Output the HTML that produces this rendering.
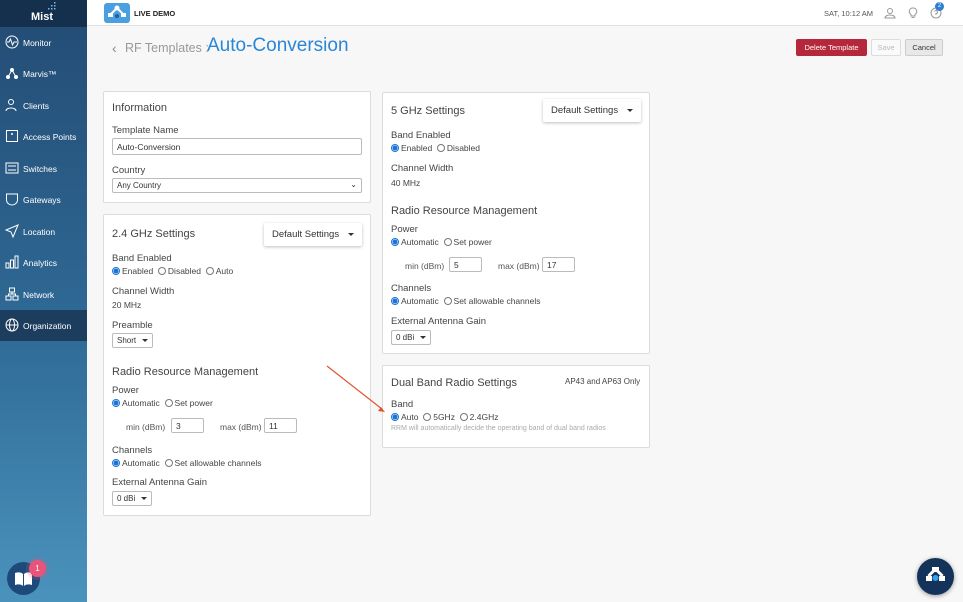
<!DOCTYPE html>
<html><head><meta charset="utf-8"><style>
*{box-sizing:border-box;margin:0;padding:0}
body{width:963px;height:602px;overflow:hidden;background:#f7f7f7;font-family:"Liberation Sans",sans-serif;color:#333;position:relative}
.a{position:absolute;white-space:nowrap}
#side{position:absolute;left:0;top:0;width:87px;height:602px;background:linear-gradient(#234b73,#2f6a96 55%,#4a93bd)}
#logo{position:absolute;left:0;top:0;width:87px;height:27px;background:#14304d}
.nav{position:absolute;left:0;width:87px;height:31px;color:#fff;font-size:8.5px;display:flex;align-items:center;padding-left:23px}
.nav svg{position:absolute;left:5px;top:8px}
#top{position:absolute;left:87px;top:0;right:0;height:26px;background:#fff;border-bottom:1px solid #e2e2e2}
.card{position:absolute;background:#fff;border:1px solid #dcdcdc;border-radius:2px}
.h{font-size:11px;color:#444}
.l{font-size:9.5px;color:#444}
.s{font-size:8.5px;color:#444}
.rb{display:inline-block;width:8px;height:8px;border:1px solid #777;border-radius:50%;vertical-align:-1px;margin-right:2px;background:#fff}
.rb.on{border-color:#1a73d9;background:radial-gradient(#1a73d9 2.2px,#fff 2.8px)}
.inp{position:absolute;border:1px solid #bbb;border-radius:2px;background:#fff;font-size:8.5px;padding:2px 4px;height:15px}
.dd{position:absolute;background:#fff;border-radius:2px;box-shadow:0 1px 3px rgba(0,0,0,.25);font-size:9.5px;color:#333;padding:6px 8px}
.sel{position:absolute;border:1px solid #bbb;border-radius:2px;font-size:8px;padding:2px 4px;height:15px;background:#fff}
.tri{display:inline-block;border-left:3px solid transparent;border-right:3px solid transparent;border-top:3.5px solid #333;vertical-align:1px;margin-left:6px}
</style></head><body>
<div id="side">
<div id="logo"><div class="a" style="left:31px;top:11px;color:#fff;font-weight:bold;font-size:11px">Mist</div>
<svg class="a" style="left:45px;top:2px" width="12" height="10"><g fill="#7fb3e0"><rect x="9" y="0" width="1.5" height="1.5"/><rect x="6" y="3" width="1.5" height="1.5"/><rect x="9" y="3" width="1.5" height="1.5"/><rect x="3" y="6" width="1.5" height="1.5"/><rect x="6" y="6" width="1.5" height="1.5"/><rect x="9" y="6" width="1.5" height="1.5"/></g></svg></div>
<div class="nav" style="top:27px"><svg width="14" height="14"><circle cx="7" cy="7" r="6" fill="none" stroke="#fff"/><path d="M2 7h2l1.5-3 2 6 1.5-3h3" fill="none" stroke="#fff"/></svg>Monitor</div>
<div class="nav" style="top:58px"><svg width="14" height="14"><path d="M3 11L7 4l4 7" stroke="#fff" fill="none"/><circle cx="7" cy="4" r="2" fill="#fff"/><circle cx="3" cy="11" r="2" fill="#fff"/><circle cx="11" cy="11" r="2" fill="#fff"/></svg>Marvis™</div>
<div class="nav" style="top:90px"><svg width="14" height="14"><circle cx="6" cy="4" r="2.5" fill="none" stroke="#fff"/><path d="M1 13c0-4 10-4 10 0" fill="none" stroke="#fff"/></svg>Clients</div>
<div class="nav" style="top:121px"><svg width="14" height="14"><rect x="1.5" y="1.5" width="11" height="11" fill="none" stroke="#fff"/><circle cx="7" cy="5" r="1" fill="#fff"/></svg>Access Points</div>
<div class="nav" style="top:153px"><svg width="14" height="14"><rect x="1" y="2" width="12" height="10" fill="none" stroke="#fff"/><path d="M3 5h8M3 9h8" stroke="#fff"/></svg>Switches</div>
<div class="nav" style="top:184px"><svg width="14" height="14"><path d="M1.5 2h11v6c0 3-3 5-5.5 5S1.5 11 1.5 8z" fill="none" stroke="#fff"/></svg>Gateways</div>
<div class="nav" style="top:216px"><svg width="14" height="14"><path d="M13 1L1 6l5 2 2 5z" fill="none" stroke="#fff"/></svg>Location</div>
<div class="nav" style="top:247px"><svg width="14" height="14"><rect x="1" y="8" width="3" height="5" fill="none" stroke="#fff"/><rect x="5.5" y="5" width="3" height="8" fill="none" stroke="#fff"/><rect x="10" y="1" width="3" height="12" fill="none" stroke="#fff"/></svg>Analytics</div>
<div class="nav" style="top:279px"><svg width="14" height="14"><rect x="4.5" y="1" width="5" height="4" fill="none" stroke="#fff"/><rect x="1" y="9" width="5" height="4" fill="none" stroke="#fff"/><rect x="8" y="9" width="5" height="4" fill="none" stroke="#fff"/><path d="M7 5v2M3.5 9V7h7v2" stroke="#fff" fill="none"/></svg>Network</div>
<div class="nav" style="top:310px;background:#1c3d5e"><svg width="14" height="14"><circle cx="7" cy="7" r="6" fill="none" stroke="#fff"/><ellipse cx="7" cy="7" rx="2.5" ry="6" fill="none" stroke="#fff"/><path d="M1 7h12" stroke="#fff"/></svg>Organization</div>
<div class="a" style="left:7px;top:562px;width:33px;height:33px;border-radius:50%;background:#1d4a7a"><svg width="33" height="33"><path d="M8 11c3-1 6-1 8 1v12c-2-2-5-2-8-1zM25 11c-3-1-6-1-8 1v12c2-2 5-2 8-1z" fill="#fff"/></svg></div>
<div class="a" style="left:29px;top:560px;width:17px;height:17px;border-radius:50%;background:#e9557a;color:#fff;font-size:8px;text-align:center;line-height:17px;box-shadow:0 0 0 3px rgba(233,85,122,.2)">1</div>
</div>
<div id="top">
<div class="a" style="left:17px;top:3px;width:26px;height:20px;background:#4a9fe0;border-radius:3px"><svg width="26" height="20"><path d="M13 5l-6 6M13 5l6 6" stroke="#fff" stroke-width="2"/><circle cx="13" cy="5" r="2.5" fill="#fff"/><rect x="4" y="10" width="5" height="4" fill="#fff"/><rect x="17" y="10" width="5" height="4" fill="#fff"/><circle cx="13" cy="13" r="2" fill="#1e5fa0"/></svg></div>
<div class="a" style="left:47px;top:9px;font-size:7.5px;font-weight:bold;color:#222">LIVE DEMO</div>
<div class="a" style="left:737px;top:9px;font-size:7.5px;color:#555">SAT, 10:12 AM</div>
<svg class="a" style="left:797px;top:7px" width="12" height="12"><circle cx="6" cy="4" r="2.5" fill="none" stroke="#999"/><path d="M1 11c0-4 10-4 10 0z" fill="none" stroke="#999"/></svg>
<svg class="a" style="left:820px;top:7px" width="12" height="12"><path d="M6 1a3.5 3.5 0 0 0-2 6.5V9h4V7.5A3.5 3.5 0 0 0 6 1zM4.5 10.5h3" fill="none" stroke="#999"/></svg>
<svg class="a" style="left:843px;top:7px" width="12" height="12"><circle cx="6" cy="6" r="5" fill="none" stroke="#999"/><path d="M4.5 4.5a1.5 1.5 0 1 1 1.5 2v1.5" fill="none" stroke="#999"/></svg>
<div class="a" style="left:848px;top:2px;width:9px;height:9px;border-radius:50%;background:#2f7fd0;color:#fff;font-size:6px;text-align:center;line-height:9px">2</div>
</div>
<div class="a" style="left:112px;top:40px;font-size:14px;color:#888">‹</div>
<div class="a" style="left:125px;top:41px;font-size:12.5px;color:#999">RF Templates :</div>
<div class="a" style="left:207px;top:35px;font-size:19px;color:#2a86d6">Auto-Conversion</div>
<div class="a" style="left:796px;top:39px;width:71px;height:17px;background:#b5273a;border-radius:2px;color:#fff;font-size:7.5px;text-align:center;line-height:17px">Delete Template</div>
<div class="a" style="left:871px;top:39px;width:30px;height:17px;border:1px solid #ddd;border-radius:2px;color:#bbb;font-size:7.5px;text-align:center;line-height:15px;background:#fafafa">Save</div>
<div class="a" style="left:905px;top:39px;width:38px;height:17px;border:1px solid #ccc;border-radius:2px;color:#333;font-size:7.5px;text-align:center;line-height:15px;background:#e8e8e8">Cancel</div>

<div class="card" style="left:103px;top:91px;width:268px;height:112px">
<div class="a h" style="left:8px;top:10px">Information</div>
<div class="a l" style="left:8px;top:33px">Template Name</div>
<div class="inp" style="left:8px;top:46px;width:250px;height:17px;padding-top:3px">Auto-Conversion</div>
<div class="a l" style="left:8px;top:73px">Country</div>
<div class="inp" style="left:8px;top:86px;width:250px;height:15px;font-size:8px">Any Country<span style="position:absolute;right:4px;top:1px;font-size:8px">⌄</span></div>
</div>

<div class="card" style="left:103px;top:214px;width:268px;height:302px">
<div class="a h" style="left:8px;top:13px">2.4 GHz Settings</div>
<div class="dd" style="left:160px;top:8px">Default Settings<span class="tri" style="margin-left:9px"></span></div>
<div class="a l" style="left:8px;top:38px">Band Enabled</div>
<div class="a s" style="left:8px;top:51px"><span class="rb on"></span>Enabled &nbsp;<span class="rb"></span>Disabled &nbsp;<span class="rb"></span>Auto</div>
<div class="a l" style="left:8px;top:71px">Channel Width</div>
<div class="a s" style="left:8px;top:85px">20 MHz</div>
<div class="a l" style="left:8px;top:105px">Preamble</div>
<div class="sel" style="left:8px;top:118px">Short<span class="tri"></span></div>
<div class="a h" style="left:8px;top:151px">Radio Resource Management</div>
<div class="a l" style="left:8px;top:170px">Power</div>
<div class="a s" style="left:8px;top:183px"><span class="rb on"></span>Automatic &nbsp;<span class="rb"></span>Set power</div>
<div class="a s" style="left:22px;top:207px;color:#555">min (dBm)</div>
<div class="inp" style="left:67px;top:203px;width:33px">3</div>
<div class="a s" style="left:116px;top:207px;color:#555">max (dBm)</div>
<div class="inp" style="left:160px;top:203px;width:33px">11</div>
<div class="a l" style="left:8px;top:230px">Channels</div>
<div class="a s" style="left:8px;top:243px"><span class="rb on"></span>Automatic &nbsp;<span class="rb"></span>Set allowable channels</div>
<div class="a l" style="left:8px;top:262px">External Antenna Gain</div>
<div class="sel" style="left:8px;top:276px">0 dBi<span class="tri"></span></div>
</div>

<div class="card" style="left:382px;top:92px;width:268px;height:262px">
<div class="a h" style="left:8px;top:12px">5 GHz Settings</div>
<div class="dd" style="left:160px;top:6px">Default Settings<span class="tri" style="margin-left:9px"></span></div>
<div class="a l" style="left:8px;top:37px">Band Enabled</div>
<div class="a s" style="left:8px;top:50px"><span class="rb on"></span>Enabled &nbsp;<span class="rb"></span>Disabled</div>
<div class="a l" style="left:8px;top:70px">Channel Width</div>
<div class="a s" style="left:8px;top:85px">40 MHz</div>
<div class="a h" style="left:8px;top:112px">Radio Resource Management</div>
<div class="a l" style="left:8px;top:131px">Power</div>
<div class="a s" style="left:8px;top:144px"><span class="rb on"></span>Automatic &nbsp;<span class="rb"></span>Set power</div>
<div class="a s" style="left:22px;top:168px;color:#555">min (dBm)</div>
<div class="inp" style="left:66px;top:164px;width:33px">5</div>
<div class="a s" style="left:115px;top:168px;color:#555">max (dBm)</div>
<div class="inp" style="left:159px;top:164px;width:33px">17</div>
<div class="a l" style="left:8px;top:190px">Channels</div>
<div class="a s" style="left:8px;top:203px"><span class="rb on"></span>Automatic &nbsp;<span class="rb"></span>Set allowable channels</div>
<div class="a l" style="left:8px;top:223px">External Antenna Gain</div>
<div class="sel" style="left:8px;top:237px">0 dBi<span class="tri"></span></div>
</div>

<div class="card" style="left:382px;top:365px;width:268px;height:83px">
<div class="a h" style="left:8px;top:11px">Dual Band Radio Settings</div>
<div class="a s" style="left:182px;top:11px;font-size:8px">AP43 and AP63 Only</div>
<div class="a l" style="left:8px;top:33px">Band</div>
<div class="a s" style="left:8px;top:46px"><span class="rb on"></span>Auto &nbsp;<span class="rb"></span>5GHz &nbsp;<span class="rb"></span>2.4GHz</div>
<div class="a" style="left:8px;top:59px;font-size:7px;color:#aaa">RRM will automatically decide the operating band of dual band radios</div>
</div>

<svg class="a" style="left:320px;top:360px" width="70" height="60"><path d="M7 6L62 49" stroke="#e5502f" stroke-width="1.2"/><path d="M65 52l-7-1 3-4z" fill="#e5502f"/></svg>

<div class="a" style="left:917px;top:558px;width:37px;height:37px;border-radius:50%;background:#14335a;box-shadow:0 1px 5px rgba(0,0,0,.4)"><svg width="37" height="37"><path d="M18.5 11l-7 7M18.5 11l7 7" stroke="#fff" stroke-width="3"/><rect x="15" y="9" width="7" height="5" fill="#fff"/><rect x="9" y="18" width="6" height="5" fill="#fff"/><rect x="22" y="18" width="6" height="5" fill="#fff"/><circle cx="18.5" cy="20" r="3" fill="#35a0f0"/></svg></div>
</body></html>
